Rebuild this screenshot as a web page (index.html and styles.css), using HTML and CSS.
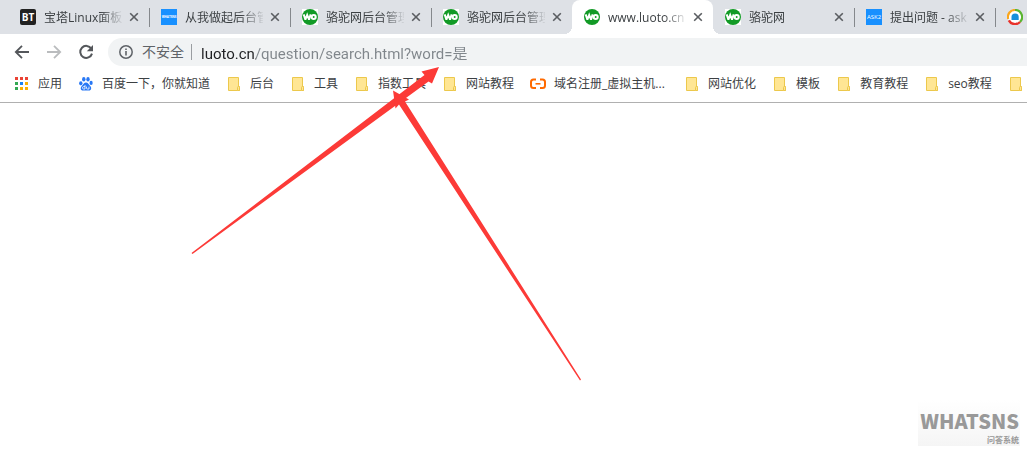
FILE: index.html
```html
<!DOCTYPE html>
<html lang="zh-CN">
<head>
  <meta charset="UTF-8" />
  <title>www.luoto.cn</title>
  <link rel="stylesheet" href="styles.css">
</head>
<body>
  <!-- Shared icons -->
  <svg class="sprite" aria-hidden="true">
    <symbol id="close" viewBox="0 0 10 10">
      <path d="M1.2 1.2l7.6 7.6M8.8 1.2L1.2 8.8" fill="none" stroke="#5a5d61" stroke-width="1.6" />
    </symbol>
    <symbol id="wo" viewBox="0 0 16 16">
      <rect width="16" height="16" fill="#fff" />
      <circle cx="8" cy="8" r="8" fill="#129a26" />
      <path d="M1.700 5.400l1.500 4.600h.4L5.200 6l1.600 4h.4l1.500-4.600" fill="none" stroke="#fff" stroke-width="2" />
      <circle cx="11.700" cy="8" r="2" fill="none" stroke="#fff" stroke-width="2.100" />
    </symbol>
    <symbol id="folder" viewBox="0 0 16 16">
      <path d="M2.5 1.5h10v9h1v4h-11z" fill="#ffe694" stroke="#ecc84c" />
      <path d="M11.5 14v-2.5q0-1 1-1t1 1v3h-2" fill="#ffe694" stroke="#ecc84c" />
    </symbol>
  </svg>

  <header class="browser">
    <nav class="tabs">
      <div class="tab">
        <span class="favicon favicon-bt">BT</span>
        <a class="tab-title" href="#">宝塔Linux面板</a>
        <button class="tab-close" aria-label="关闭"><svg><use href="#close" /></svg></button>
      </div>
      <div class="tab">
        <span class="favicon favicon-blue favicon-tiny">WHATSNS</span>
        <a class="tab-title" href="#">从我做起后台管</a>
        <button class="tab-close" aria-label="关闭"><svg><use href="#close" /></svg></button>
      </div>
      <div class="tab">
        <svg class="favicon"><use href="#wo" /></svg>
        <a class="tab-title" href="#">骆驼网后台管理</a>
        <button class="tab-close" aria-label="关闭"><svg><use href="#close" /></svg></button>
      </div>
      <div class="tab no-line">
        <svg class="favicon"><use href="#wo" /></svg>
        <a class="tab-title" href="#">骆驼网后台管理</a>
        <button class="tab-close" aria-label="关闭"><svg><use href="#close" /></svg></button>
      </div>
      <div class="tab active">
        <svg class="favicon"><use href="#wo" /></svg>
        <a class="tab-title" href="#">www.luoto.cn</a>
        <button class="tab-close" aria-label="关闭"><svg><use href="#close" /></svg></button>
      </div>
      <div class="tab">
        <svg class="favicon"><use href="#wo" /></svg>
        <a class="tab-title" href="#">骆驼网</a>
        <button class="tab-close" aria-label="关闭"><svg><use href="#close" /></svg></button>
      </div>
      <div class="tab">
        <span class="favicon favicon-blue">ASK2</span>
        <a class="tab-title" href="#">提出问题 - ask</a>
        <button class="tab-close" aria-label="关闭"><svg><use href="#close" /></svg></button>
      </div>
      <div class="tab">
        <svg class="favicon" viewBox="0 0 16 16">
          <circle cx="8" cy="8" r="7" fill="#fff" />
          <path d="M1.2 10A7 7 0 0 1 8 1" fill="none" stroke="#fba61c" stroke-width="2.2" />
          <path d="M8 1a7 7 0 0 1 5 12" fill="none" stroke="#5bb531" stroke-width="2.2" />
          <path d="M1.8 11.4A7 7 0 0 0 13 13" fill="none" stroke="#e8322b" stroke-width="2.4" />
          <path d="M4.5 11V8a3.6 3.6 0 0 1 7.2 0v3z" fill="#168edb" />
        </svg>
      </div>
    </nav>

    <div class="toolbar">
      <button class="nav-button" aria-label="后退">
        <svg viewBox="0 0 16 16"><path d="M15 8H2M8 1.8L1.8 8 8 14.2" fill="none" stroke="#54575b" stroke-width="1.8" /></svg>
      </button>
      <button class="nav-button" aria-label="前进">
        <svg viewBox="0 0 16 16"><path d="M1 8h13M8 1.8L14.2 8 8 14.2" fill="none" stroke="#babcbe" stroke-width="1.8" /></svg>
      </button>
      <button class="nav-button" aria-label="刷新">
        <svg viewBox="0 0 16 16"><path d="M13.3 4.6A6 6 0 1 0 14 9.6" fill="none" stroke="#54575b" stroke-width="2" /><path d="M15 1v6.2H8.8z" fill="#54575b" /></svg>
      </button>
      <div class="address">
        <svg class="info" viewBox="0 0 14 14"><circle cx="7" cy="7" r="6.2" fill="none" stroke="#5f6368" stroke-width="1.5" /><path d="M7 6v4.4M7 3.4v1.7" stroke="#5f6368" stroke-width="1.6" /></svg>
        <label class="insecure" for="url">不安全</label>
        <input class="url" id="url" type="text" value="luoto.cn/question/search.html?word=是" />
      </div>
    </div>

    <nav class="bookmarks">
      <a class="bookmark" href="#">
        <svg viewBox="0 0 16 16">
          <path d="M1 1h3v3H1zM6 1h3v3H6zM11 1h3v3h-3z" fill="#ea4335" />
          <path d="M1 6h3v3H1zM1 11h3v3H1z" fill="#34a853" />
          <path d="M6 6h3v3H6z" fill="#1a82f7" />
          <path d="M11 6h3v3h-3zM6 11h3v3H6zM11 11h3v3h-3z" fill="#fbb003" />
        </svg>应用</a>
      <a class="bookmark" href="#">
        <svg viewBox="0 0 16 16" fill="#2878f5">
          <ellipse cx="2.8" cy="7.3" rx="1.7" ry="2.1" />
          <ellipse cx="5.8" cy="3.2" rx="1.7" ry="2.2" />
          <ellipse cx="10" cy="3.2" rx="1.7" ry="2.2" />
          <ellipse cx="13.1" cy="6.9" rx="1.6" ry="2.1" />
          <path d="M8 6.5c2 0 2.4 1.8 4 3.2 2 1.8 1.4 4.8-1 4.9-1.3.1-1.8-.2-3-.2s-1.700.3-3 .2c-2.600-.2-3-3-1-4.900 1.600-1.500 2-3.200 4-3.200z" />
          <path d="M7 9v4H5.500q-1-.1-1-1.200t1-1.200H7M8.500 10.600v1.600q0 .8.900.8h1.600v-2.400" fill="none" stroke="#fff" stroke-width=".8" />
        </svg>百度一下，你就知道</a>
      <a class="bookmark" href="#"><svg><use href="#folder" /></svg>后台</a>
      <a class="bookmark" href="#"><svg><use href="#folder" /></svg>工具</a>
      <a class="bookmark" href="#"><svg><use href="#folder" /></svg>指数工具</a>
      <a class="bookmark" href="#"><svg><use href="#folder" /></svg>网站教程</a>
      <a class="bookmark bookmark-long" href="#">
        <svg viewBox="0 0 16 16"><path d="M6 3.500H3.500Q1 3.500 1 6v3.500Q1 12 3.500 12H6M10 3.500h2.500Q15 3.500 15 6v3.500q0 2.500-2.500 2.500H10" fill="none" stroke="#ff6a00" stroke-width="2" /><path d="M5.500 7.800h5" stroke="#ff6a00" stroke-width="1.600" /></svg>域名注册_虚拟主机...</a>
      <a class="bookmark" href="#"><svg><use href="#folder" /></svg>网站优化</a>
      <a class="bookmark" href="#"><svg><use href="#folder" /></svg>模板</a>
      <a class="bookmark" href="#"><svg><use href="#folder" /></svg>教育教程</a>
      <a class="bookmark" href="#"><svg><use href="#folder" /></svg>seo教程</a>
      <a class="bookmark" href="#" aria-label="书签"><svg><use href="#folder" /></svg></a>
    </nav>
  </header>

  <main class="page">
    <div class="watermark">
      <strong>WHATSNS</strong>
      <small>问答系统</small>
    </div>
  </main>

  <!-- Arrows drawn over the window -->
  <svg class="arrows" width="600" height="400" viewBox="0 0 600 400" aria-hidden="true">
    <path d="M191.500 253L424.500 75 421.500 71.500 439 67 432 83.500 428.500 81.500 192.500 254z" />
    <path d="M580 380.500L399 104.500 395.500 108.500 393 90.500 409 99.500 405 101.500 581 379.500z" />
  </svg>
</body>
</html>
```
FILE: styles.css
```css
* {
  box-sizing: border-box;
}

body {
  margin: 0;
  min-height: 100vh;
  display: flex;
  flex-direction: column;
  overflow: hidden;
  position: relative;
  background: #fff;
  color: #3c4043;
  font-family: "Open Sans", "Noto Sans CJK SC", sans-serif;
  font-size: 12px;
}

a {
  color: inherit;
  text-decoration: none;
}

button {
  padding: 0;
  border: none;
  background: none;
  cursor: pointer;
}

.sprite {
  position: absolute;
  width: 0;
  height: 0;
}

/* Tabs */
.tabs {
  display: flex;
  height: 34px;
  padding-left: 8px;
  background: #dee1e6;
  overflow: hidden;
}

.tab {
  flex: 0 0 141px;
  min-width: 0;
  display: flex;
  align-items: center;
  padding: 0 10px 0 12px;
  position: relative;
}

.tab::after {
  content: "";
  position: absolute;
  right: -1px;
  top: 8px;
  width: 1px;
  height: 19px;
  background: #85888c;
}

.tab.no-line::after {
  display: none;
}

.tab.active {
  background: #fff;
  border-radius: 8px 8px 0 0;
}

/* curved feet of the active tab */
.tab.active::before,
.tab.active::after {
  content: "";
  position: absolute;
  top: auto;
  bottom: 0;
  width: 8px;
  height: 8px;
}

.tab.active::before {
  left: -8px;
  background: radial-gradient(circle at 0 0, #dee1e6 8px, #fff 8px);
}

.tab.active::after {
  right: -8px;
  background: radial-gradient(circle at 100% 0, #dee1e6 8px, #fff 8px);
}

.favicon {
  flex: none;
  width: 16px;
  height: 16px;
  margin-right: 8px;
  text-align: center;
  line-height: 16px;
  color: #fff;
}

.favicon-bt {
  border-radius: 2px;
  background: #222;
  font-size: 10px;
  font-weight: bold;
}

.favicon-blue {
  background: #1890ff;
  font-size: 6px;
}

.favicon-tiny {
  font-size: 3px;
  font-weight: bold;
}

.tab-title {
  flex: 1;
  min-width: 0;
  overflow: hidden;
  white-space: nowrap;
  line-height: 20px;
  padding-top: 2px;
  margin-right: 7px;
  -webkit-mask-image: linear-gradient(to right, #000 56px, transparent 80px);
  mask-image: linear-gradient(to right, #000 56px, transparent 80px);
}

.tab-close,
.tab-close svg {
  flex: none;
  display: block;
  width: 10px;
  height: 10px;
}

/* Toolbar */
.toolbar {
  display: flex;
  align-items: center;
  padding: 4px 0 0 14px;
}

.nav-button {
  width: 16px;
  height: 16px;
  margin-right: 16px;
}

.nav-button svg {
  display: block;
}

.address {
  flex: 1;
  display: flex;
  align-items: center;
  height: 28px;
  margin-left: -2px;
  padding-left: 11px;
  border-radius: 14px 0 0 14px;
  background: #f1f3f4;
  font-size: 14px;
}

.info {
  width: 14px;
  height: 14px;
  margin-right: 9px;
}

.insecure {
  padding-right: 7px;
  border-right: 1px solid #9a9da1;
  line-height: 16px;
  color: #5f6368;
}

.url {
  flex: 1;
  padding: 0 0 0 9px;
  border: none;
  outline: none;
  font-family: Roboto, "Noto Sans CJK SC", sans-serif;
  font-size: 15px;
  /* host dark, path grey */
  color: transparent;
  background: linear-gradient(to right, #202124 64px, #80868b 64px);
  -webkit-background-clip: text;
  background-clip: text;
}

/* Bookmarks bar */
.bookmarks {
  display: flex;
  align-items: center;
  gap: 16px;
  height: 37px;
  padding-left: 14px;
  border-bottom: 1px solid #b0b0b0;
  overflow: hidden;
}

.bookmark {
  flex: none;
  display: flex;
  align-items: center;
  gap: 8px;
  line-height: 20px;
  white-space: nowrap;
}

.bookmark svg {
  width: 16px;
  height: 16px;
}

.bookmark-long {
  min-width: 138px;
}

/* Page */
.page {
  flex: 1;
  display: flex;
  align-items: flex-end;
  justify-content: flex-end;
  padding: 0 7px 5px;
}

.watermark {
  display: flex;
  flex-direction: column;
  align-items: flex-end;
  padding: 8px 1px 0 2px;
  background: linear-gradient(#fff, #f5f5f5);
  color: #999;
  font-family: "Noto Sans CJK SC", sans-serif;
}

.watermark strong {
  font-size: 20px;
  font-weight: 900;
  line-height: 26px;
}

.watermark small {
  font-size: 8px;
  font-weight: bold;
  line-height: 12px;
}

.arrows {
  position: absolute;
  left: 0;
  top: 0;
  fill: #fc3a37;
  pointer-events: none;
}
```
